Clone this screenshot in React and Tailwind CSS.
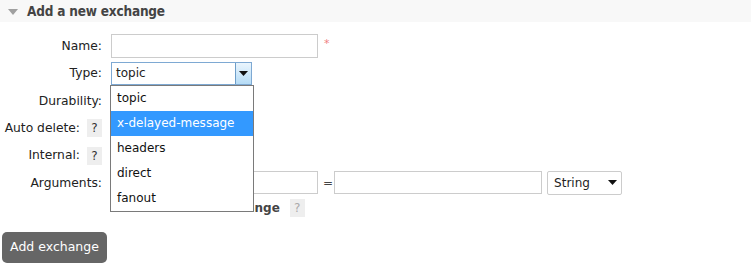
const OPTIONS = ['topic', 'x-delayed-message', 'headers', 'direct', 'fanout'];

function Help({ faint }) {
	return (
		<span
			className={`inline-flex h-[18px] w-[15px] items-center justify-center bg-[#eeeeee] text-[12px] ${
				faint ? 'text-[#aaaaaa]' : 'text-[#333333]'
			}`}
		>
			?
		</span>
	);
}

function Row({ label, help, children }) {
	return (
		<div className="flex h-[27.4px] items-center">
			<div className="flex w-[103px] items-center justify-end gap-[7px] pr-[1px] text-[12.3px] text-[#222222]">
				<span>{label}</span>
				{help && <Help />}
			</div>
			<div className="ml-[8px] flex items-center">{children}</div>
		</div>
	);
}

function Caret() {
	return (
		<svg width="9" height="5" viewBox="0 0 9 5">
			<path d="M0 0h9L4.5 5z" fill="#111" />
		</svg>
	);
}

export default function App() {
	return (
		<div className="h-[270px] w-[753px] overflow-hidden bg-white font-['DejaVu_Sans',Verdana,sans-serif] text-[#222222]">
			<div className="mr-[2px] flex h-[22px] items-center bg-[#f8f8f8] pl-[8px]">
				<svg width="10" height="6" viewBox="0 0 10 6" className="mr-[9px] mt-[1px]">
					<path d="M0 0h10L5 6z" fill="#a0a0a0" />
				</svg>
				<h2 className="text-[13.5px] font-bold tracking-[-0.2px] text-[#444444] [font-stretch:condensed]">
					Add a new exchange
				</h2>
			</div>

			<div className="pt-[10.3px]">
				<Row label="Name:">
					<input className="h-[24px] w-[207px] border border-[#cccccc] bg-white px-1 text-[12px] outline-none" />
					<span className="ml-[6px] -mt-[4px] text-[11px] text-[#f08080]">*</span>
				</Row>

				<Row label="Type:">
					<div className="relative">
						<div className="flex h-[23px] w-[141px] items-stretch border border-[#7ea9d3] bg-white text-[12px]">
							<span className="flex flex-1 items-center pl-[4px]">topic</span>
							<span className="flex w-[16px] items-center justify-center border-l border-[#6e9ec9] bg-gradient-to-b from-[#eaf5fd] to-[#b6dcf6]">
								<Caret />
							</span>
						</div>
						<ul className="absolute left-[-1px] top-full z-10 w-[144px] border border-[#7a7a7a] bg-white text-[12px]">
							{OPTIONS.map((o) => (
								<li
									key={o}
									className={`flex h-[25px] items-center pl-[6px] ${
										o === 'x-delayed-message' ? 'bg-[#3399ff] text-white' : 'text-[#111111]'
									}`}
								>
									{o}
								</li>
							))}
						</ul>
					</div>
				</Row>

				<Row label="Durability:">
					<div className="h-[22px] w-[90px] border border-[#cccccc]" />
				</Row>
				<Row label="Auto delete:" help>
					<div className="h-[22px] w-[60px] border border-[#cccccc]" />
				</Row>
				<Row label="Internal:" help>
					<div className="h-[22px] w-[60px] border border-[#cccccc]" />
				</Row>

				<Row label="Arguments:">
					<input className="h-[23px] w-[207px] border border-[#cccccc] bg-white outline-none" />
					<span className="ml-[5px] text-[12px] text-[#444444]">=</span>
					<input className="ml-[1px] h-[23px] w-[208px] border border-[#cccccc] bg-white outline-none" />
					<div className="ml-[5px] flex h-[24px] w-[75px] items-center justify-between rounded-[2px] border border-[#cccccc] bg-white pl-[6px] pr-[4px] text-[12px]">
						<span>String</span>
						<Caret />
					</div>
				</Row>

				<div className="flex h-[22px] items-center pl-[147px] text-[12px]">
					<span className="font-bold text-[#444444]">Alternate exchange</span>
					<span className="ml-[10px]">
						<Help faint />
					</span>
				</div>
			</div>

			<button
				type="button"
				className="ml-[2px] mt-[13px] h-[31px] w-[105px] rounded-[5px] bg-[#666666] text-[12.5px] text-white"
			>
				Add exchange
			</button>
		</div>
	);
}
